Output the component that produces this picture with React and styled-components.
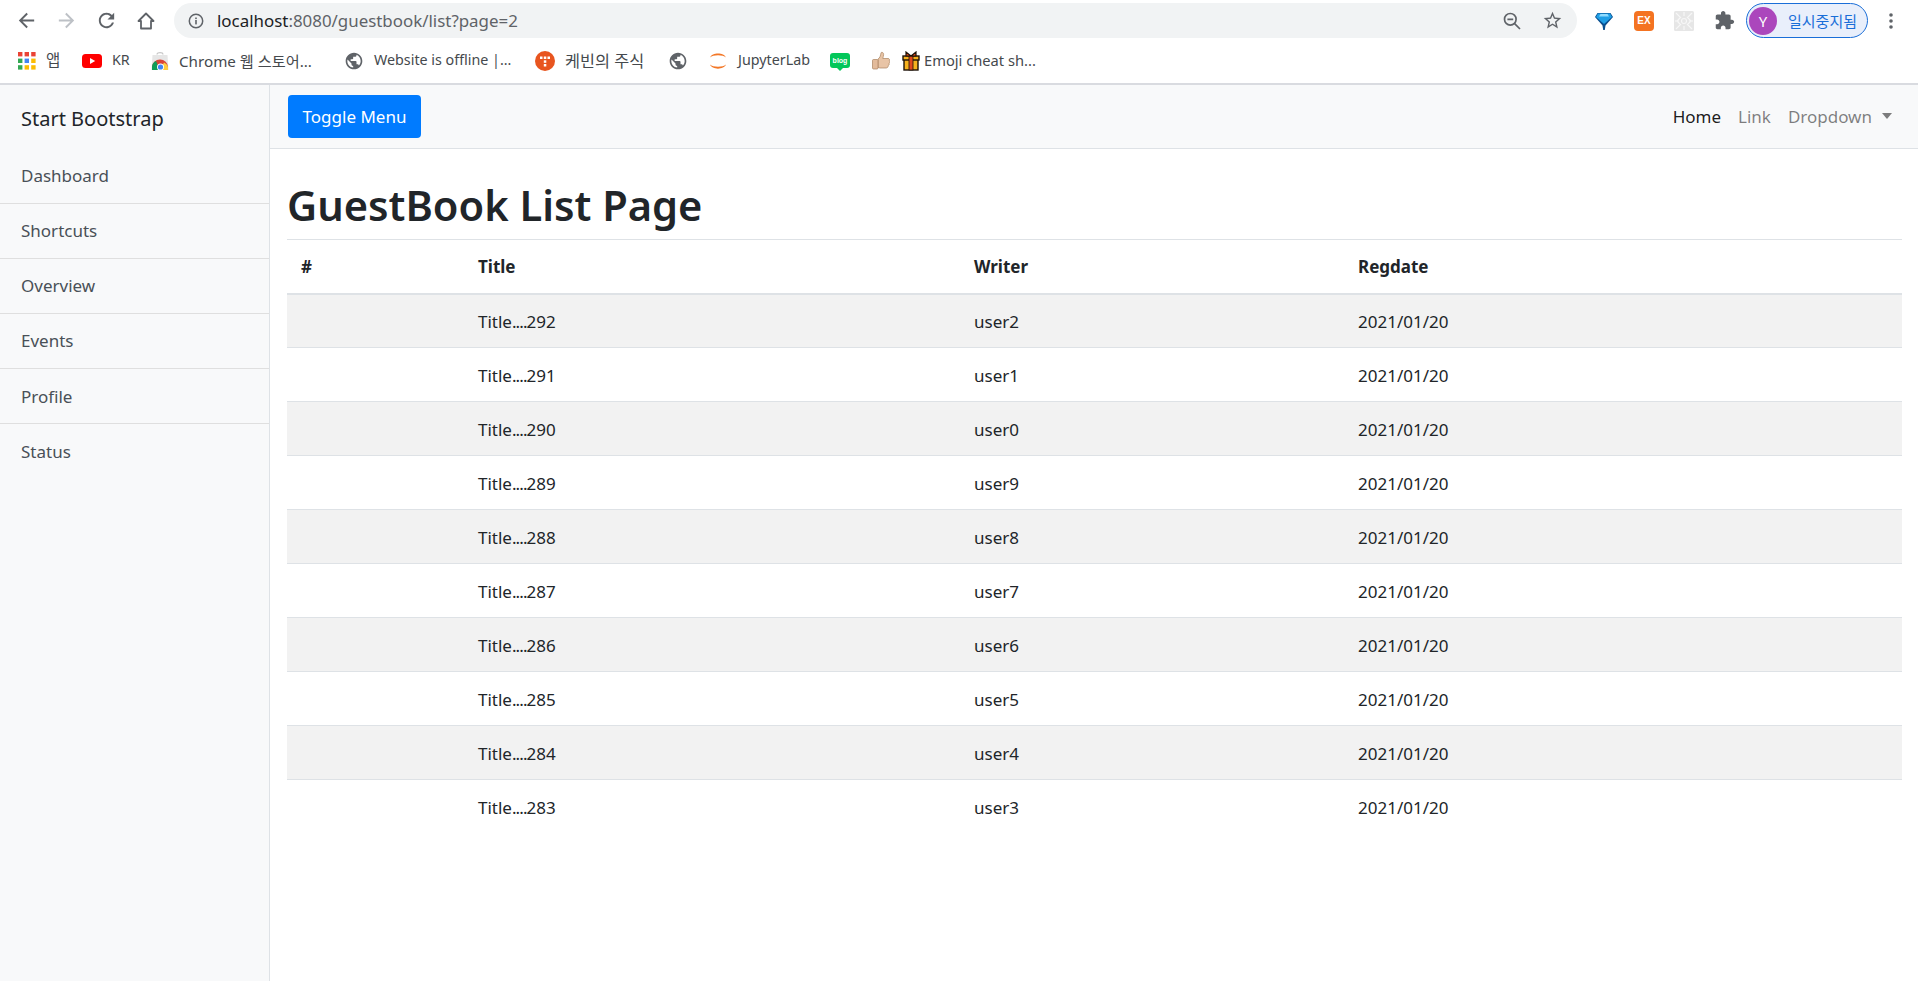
import React from "react";
import styled, { createGlobalStyle } from "styled-components";

const FONT = `"Noto Sans", "Noto Sans CJK KR", sans-serif`;

const Global = createGlobalStyle`
  html, body { margin: 0; padding: 0; background: #fff; }
  body { font-family: ${FONT}; color: #212529; height: 981px; overflow: hidden; }
`;

/* ---------- browser chrome ---------- */
const Chrome = styled.header`
  height: 83px;
  border-bottom: 2px solid #d9dbe0;
  background: #fff;
`;
const Toolbar = styled.div`
  height: 41px;
  display: flex;
  align-items: center;
  padding: 0 7px 0 6px;
`;
const NavIcon = styled.span`
  width: 40px;
  height: 36px;
  display: flex;
  align-items: center;
  justify-content: center;
  flex: none;
`;
const Omnibox = styled.div`
  width: 1403px;
  height: 35px;
  margin: 0 0 0 8px;
  border-radius: 18px;
  background: #f1f3f4;
  display: flex;
  align-items: center;
  padding: 0 5px 0 14px;
  box-sizing: border-box;
  flex: none;
`;
const Url = styled.div`
  margin-left: 13px;
  flex: 1;
  font-size: 16.9px;
  color: #5f6368;
  white-space: nowrap;
  & b { font-weight: 400; color: #202124; }
`;
const OmniIcon = styled.span`
  width: 40px;
  display: flex;
  justify-content: center;
  align-items: center;
`;
const ExtGroup = styled.div`
  display: flex;
  align-items: center;
  margin-left: 7px;
  flex: none;
`;
const ExtIcon = styled.span`
  width: 40px;
  height: 36px;
  display: flex;
  align-items: center;
  justify-content: center;
`;
const ExBadge = styled.span`
  width: 20px;
  height: 20px;
  border-radius: 4px;
  background: #f47321;
  color: #fff;
  font-size: 10px;
  font-weight: 700;
  line-height: 20px;
  text-align: center;
  font-family: "Liberation Sans", sans-serif;
`;
const Profile = styled.div`
  width: 122px;
  height: 35px;
  box-sizing: border-box;
  margin-left: 2px;
  border: 1.5px solid #1a6ed8;
  border-radius: 18px;
  background: #e9effb;
  display: flex;
  align-items: center;
  padding-left: 2px;
  flex: none;
`;
const Avatar = styled.span`
  width: 28px;
  height: 28px;
  border-radius: 50%;
  background: #ab47bc;
  color: #fff;
  font-size: 15px;
  display: flex;
  align-items: center;
  justify-content: center;
  flex: none;
`;
const ProfileText = styled.span`
  margin-left: 11px;
  font-size: 15px;
  color: #1a6ed8;
  white-space: nowrap;
`;
const Dots = styled.span`
  margin-left: 7px;
  width: 32px;
  display: flex;
  justify-content: center;
`;
const Bookmarks = styled.div`
  height: 39px;
  display: flex;
  align-items: center;
  padding-left: 18px;
`;
const Bookmark = styled.div`
  width: ${(p) => p.$w}px;
  flex: none;
  display: flex;
  align-items: center;
  height: 24px;
  overflow: hidden;
`;
const BookmarkText = styled.span`
  margin-left: ${(p) => p.$gap ?? 10}px;
  padding-bottom: 2px;
  font-size: ${(p) => p.$size ?? 14.3}px;
  color: #45494d;
  white-space: nowrap;
`;
const BlogBadge = styled.span`
  position: relative;
  width: 20px;
  height: 15px;
  border-radius: 3px;
  background: #03c75a;
  color: #fff;
  font-size: 7px;
  font-weight: 700;
  line-height: 15px;
  text-align: center;
  font-family: "Liberation Sans", sans-serif;
  &::after {
    content: "";
    position: absolute;
    left: 7px;
    bottom: -3px;
    border: 3px solid transparent;
    border-bottom: 0;
    border-top-color: #03c75a;
  }
`;

/* ---------- page ---------- */
const Page = styled.div`
  display: flex;
  height: 896px;
`;
const Sidebar = styled.aside`
  width: 270px;
  box-sizing: border-box;
  flex: none;
  background: #f8f9fa;
  border-right: 1px solid #dee2e6;
`;
const Brand = styled.div`
  height: 64px;
  display: flex;
  align-items: center;
  padding: 2px 0 0 21px;
  box-sizing: border-box;
  font-size: 20px;
  color: #212529;
`;
const MenuItem = styled.div`
  height: 55px;
  box-sizing: border-box;
  padding: 0 0 ${(p) => (p.$low ? 0 : 2)}px 21px;
  display: flex;
  align-items: center;
  font-size: 17px;
  color: #495057;
  border-bottom: ${(p) => (p.$last ? "0" : "1px solid #dfdfdf")};
`;
const Main = styled.main`
  flex: 1;
  min-width: 0;
  display: flex;
  flex-direction: column;
`;
const TopNav = styled.nav`
  height: 64px;
  box-sizing: border-box;
  background: #f8f9fa;
  border-bottom: 1px solid #dee2e6;
  display: flex;
  align-items: center;
  justify-content: space-between;
  padding: 0 26px 1px 18px;
`;
const Toggle = styled.button`
  width: 133px;
  height: 43px;
  padding: 0;
  border: 0;
  border-radius: 4px;
  background: #007bff;
  color: #fff;
  font-family: ${FONT};
  font-size: 17px;
`;
const NavLinks = styled.div`
  display: flex;
  align-items: center;
  gap: 17px;
`;
const NavLink = styled.span`
  font-size: 17px;
  color: ${(p) => (p.$active ? "rgba(0,0,0,.9)" : "rgba(0,0,0,.5)")};
  display: flex;
  align-items: center;
`;
const Caret = styled.i`
  margin-left: 10px;
  border-top: 6px solid rgba(0, 0, 0, 0.5);
  border-left: 5.5px solid transparent;
  border-right: 5.5px solid transparent;
`;
const Content = styled.section`
  padding: 0 16px 0 17px;
`;
const Title = styled.h1`
  margin: 0;
  height: 90px;
  box-sizing: border-box;
  padding-top: 28px;
  font-size: 41.6px;
  line-height: 56px;
  font-weight: 600;
  color: #212529;
`;
const Table = styled.table`
  width: 100%;
  table-layout: fixed;
  border-collapse: collapse;
  font-size: 17px;
`;
const Th = styled.th`
  width: ${(p) => p.$w}px;
  height: 54px;
  padding: 0 0 0 14px;
  box-sizing: border-box;
  text-align: left;
  font-weight: 700;
  color: #212529;
  border-top: 1px solid #dee2e6;
  border-bottom: 2px solid #dee2e6;
`;
const Row = styled.tr`
  background: ${(p) => (p.$odd ? "#f2f2f2" : "#fff")};
`;
const Td = styled.td`
  height: 54px;
  padding: 1px 0 0 14px;
  box-sizing: border-box;
  color: #212529;
  border-top: ${(p) => (p.$first ? "0" : "1px solid #dee2e6")};
`;
const Ellipsis = styled.span`
  letter-spacing: -0.9px;
`;

/* ---------- drawings ---------- */
const I = ({ d, c = "#5f6368", s = 20 }) => (
  <svg width={s} height={s} viewBox="0 0 24 24" fill={c}><path d={d} /></svg>
);
const BACK = "M20 11H7.83l5.59-5.59L12 4l-8 8 8 8 1.41-1.41L7.83 13H20v-2z";
const FWD = "M12 4l-1.41 1.41L16.17 11H4v2h12.17l-5.58 5.59L12 20l8-8z";
const RELOAD = "M17.65 6.35C16.2 4.9 14.21 4 12 4c-4.42 0-7.99 3.58-7.99 8s3.57 8 7.99 8c3.73 0 6.84-2.55 7.73-6h-2.08c-.82 2.33-3.04 4-5.65 4-3.31 0-6-2.69-6-6s2.69-6 6-6c1.66 0 3.14.69 4.22 1.78L13 11h7V4l-2.35 2.35z";
const STAR = "M22 9.24l-7.19-.62L12 2 9.19 8.63 2 9.24l5.46 4.73L5.82 21 12 17.27 18.18 21l-1.63-7.03L22 9.24zM12 15.4l-3.76 2.27 1-4.28-3.32-2.88 4.38-.38L12 6.1l1.71 4.04 4.38.38-3.32 2.88 1 4.28L12 15.4z";
const PUZZLE = "M20.5 11H19V7c0-1.1-.9-2-2-2h-4V3.5C13 2.12 11.88 1 10.5 1S8 2.12 8 3.5V5H4c-1.1 0-1.99.9-1.99 2v3.8H3.5c1.49 0 2.7 1.21 2.7 2.7s-1.21 2.7-2.7 2.7H2V20c0 1.1.9 2 2 2h3.8v-1.5c0-1.49 1.21-2.7 2.7-2.7 1.49 0 2.7 1.21 2.7 2.7V22H17c1.1 0 2-.9 2-2v-4h1.5c1.38 0 2.5-1.12 2.5-2.5S21.88 11 20.5 11z";
const GLOBE = "M12 2C6.48 2 2 6.48 2 12s4.48 10 10 10 10-4.48 10-10S17.52 2 12 2zm-1 17.93c-3.95-.49-7-3.85-7-7.93 0-.62.08-1.21.21-1.79L9 15v1c0 1.1.9 2 2 2v1.93zm6.9-2.54c-.26-.81-1-1.39-1.9-1.39h-1v-3c0-.55-.45-1-1-1H8v-2h2c.55 0 1-.45 1-1V7h2c1.1 0 2-.9 2-2v-.41c2.93 1.19 5 4.06 5 7.41 0 2.08-.8 3.97-2.1 5.39z";

const Home = () => (
  <svg width="20" height="20" viewBox="0 0 20 20" fill="none" stroke="#5f6368" strokeWidth="1.8" strokeLinejoin="round">
    <path d="M10 2.5 2.5 10H5v7.5h10V10h2.5z" />
  </svg>
);
const Info = () => (
  <svg width="16" height="16" viewBox="0 0 16 16">
    <circle cx="8" cy="8" r="6.7" fill="none" stroke="#5f6368" strokeWidth="1.5" />
    <rect x="7.2" y="7" width="1.6" height="4.4" fill="#5f6368" />
    <rect x="7.2" y="4.5" width="1.6" height="1.6" fill="#5f6368" />
  </svg>
);
const ZoomOut = () => (
  <svg width="20" height="20" viewBox="0 0 20 20" fill="none" stroke="#5f6368" strokeWidth="1.7">
    <circle cx="8.3" cy="8.3" r="5.8" />
    <path d="M12.6 12.6 18 18M5.4 8.3h5.8" />
  </svg>
);
const Diamond = () => (
  <svg width="20" height="20" viewBox="0 0 20 20">
    <path d="M3.5 2h13L19 6l-7.500 8.500L10.800 19H9.200l-.7-4.500L1 6z" fill="#0a4f8f" />
    <path d="M4 2.500h12L18 6l-8 7-8-7z" fill="#1f9fe6" />
    <path d="M6.500 3h7l1.500 2.500H5z" fill="#8fdcff" />
  </svg>
);
const Frost = () => (
  <svg width="20" height="20" viewBox="0 0 20 20">
    <rect width="20" height="20" rx="1.5" fill="#e6e6e6" />
    <g fill="none" stroke="#f7f7f7" strokeWidth="1.1">
      <circle cx="10" cy="10" r="2.5" />
      <path d="M2 2l5 5M18 2l-5 5M2 18l5-5M18 18l-5-5M10 1v4M10 15v4M1 10h4M15 10h4" />
      <path d="M3 10l3-3M3 10l3 3M17 10l-3-3M17 10l-3 3" />
    </g>
  </svg>
);
const More = () => (
  <svg width="4" height="16" viewBox="0 0 4 16" fill="#5f6368">
    <circle cx="2" cy="2" r="1.8" /><circle cx="2" cy="8" r="1.8" /><circle cx="2" cy="14" r="1.8" />
  </svg>
);
const Apps = () => (
  <svg width="18" height="18" viewBox="0 0 18 18">
    {[["#ea4335", "#ea4335", "#ea4335"], ["#34a853", "#4285f4", "#fbbc05"], ["#34a853", "#fbbc05", "#fbbc05"]].map((row, y) =>
      row.map((c, x) => <rect key={`${x}${y}`} x={x * 6.6} y={y * 6.6} width="4.4" height="4.4" fill={c} />)
    )}
  </svg>
);
const YouTube = () => (
  <svg width="20" height="14" viewBox="0 0 20 14">
    <rect width="20" height="14" rx="3.5" fill="#f00" />
    <path d="M8 4l5.2 3L8 10z" fill="#fff" />
  </svg>
);
const Store = () => (
  <svg width="18" height="20" viewBox="0 0 18 20">
    <path d="M6 3.5C6 1 12 1 12 3.5" fill="none" stroke="#c8c8c8" strokeWidth="1.2" />
    <path d="M1.5 4h15l1 15H.5z" fill="#e6e6e6" />
    <path d="M1 16a8 7.5 0 0 1 16 0v3H1z" fill="#db4437" />
    <path d="M1 19v-3a8 7 0 0 1 4-6l4 9z" fill="#0f9d58" />
    <path d="M13 11.500a8 7 0 0 1 4 4.500v3h-8z" fill="#ffcd40" />
    <circle cx="9.500" cy="16" r="3.500" fill="#fff" />
    <circle cx="9.500" cy="16" r="2.600" fill="#4285f4" />
  </svg>
);
const Kevin = () => (
  <svg width="20" height="20" viewBox="0 0 20 20">
    <circle cx="10" cy="10" r="10" fill="#e8551f" />
    <g fill="#fff">
      <rect x="5" y="5.500" width="2.500" height="2.500" /><rect x="8.800" y="5.500" width="2.500" height="2.500" /><rect x="12.500" y="5.500" width="2.500" height="2.500" />
      <rect x="8.800" y="9.300" width="2.500" height="2.500" /><rect x="8.800" y="13" width="2.500" height="2.500" />
    </g>
  </svg>
);
const Jupyter = () => (
  <svg width="20" height="20" viewBox="0 0 20 20" fill="#f37726">
    <path d="M2 6.500C4 1 16 1 18 6.500 15 3.500 5 3.500 2 6.500z" />
    <path d="M2 13.500C4 19 16 19 18 13.500 15 16.500 5 16.500 2 13.500z" />
  </svg>
);
const Thumb = () => (
  <svg width="20" height="20" viewBox="0 0 20 20">
    <path d="M8 8c2-1 2.500-3.500 3-6 .2-1.200 2.600-1 2.600 1.500 0 1.500-.6 2.800-.8 4H18c1.500 0 1.800 1.200 1.400 2.200.6 1 .4 2-.3 2.600.3 1-.1 1.900-.9 2.300.1 1.400-.8 2.400-2.200 2.400H10c-1 0-1.500-.6-2-.7z" fill="#e8c4a6" stroke="#a9825f" strokeWidth=".7" />
    <rect x="2.500" y="8.500" width="5.500" height="9.500" rx="1" fill="#e3bb9b" stroke="#a9825f" strokeWidth=".7" />
  </svg>
);
const Gift = () => (
  <svg width="18" height="20" viewBox="0 0 18 20">
    <rect x="2" y="7" width="14" height="12" fill="#f7b11d" stroke="#1d1208" strokeWidth="1.400" />
    <rect x="1" y="5" width="16" height="4" fill="#f7b11d" stroke="#1d1208" strokeWidth="1.400" />
    <rect x="7" y="5" width="4" height="14" fill="#e2491d" stroke="#1d1208" strokeWidth=".8" />
    <path d="M9 5 4 1v4zM9 5l5-4v4z" fill="#e2491d" stroke="#1d1208" strokeWidth="1.200" />
  </svg>
);

const rows = [
  ["292", "user2"], ["291", "user1"], ["290", "user0"], ["289", "user9"], ["288", "user8"],
  ["287", "user7"], ["286", "user6"], ["285", "user5"], ["284", "user4"], ["283", "user3"],
];
const menu = ["Dashboard", "Shortcuts", "Overview", "Events", "Profile", "Status"];

export default function App() {
  return (
    <>
      <Global />
      <Chrome>
        <Toolbar>
          <NavIcon><I d={BACK} s={23} /></NavIcon>
          <NavIcon><I d={FWD} c="#bdc1c6" s={23} /></NavIcon>
          <NavIcon><I d={RELOAD} s={23} /></NavIcon>
          <NavIcon><Home /></NavIcon>
          <Omnibox>
            <Info />
            <Url><b>localhost</b>:8080/guestbook/list?page=2</Url>
            <OmniIcon><ZoomOut /></OmniIcon>
            <OmniIcon><I d={STAR} s={21} /></OmniIcon>
          </Omnibox>
          <ExtGroup>
            <ExtIcon><Diamond /></ExtIcon>
            <ExtIcon><ExBadge>EX</ExBadge></ExtIcon>
            <ExtIcon><Frost /></ExtIcon>
            <ExtIcon><I d={PUZZLE} s={21} /></ExtIcon>
          </ExtGroup>
          <Profile>
            <Avatar>Y</Avatar>
            <ProfileText>일시중지됨</ProfileText>
          </Profile>
          <Dots><More /></Dots>
        </Toolbar>
        <Bookmarks>
          <Bookmark $w={64}><Apps /><BookmarkText $size={15.500}>앱</BookmarkText></Bookmark>
          <Bookmark $w={69}><YouTube /><BookmarkText>KR</BookmarkText></Bookmark>
          <Bookmark $w={193}><Store /><BookmarkText $size={15.200}>Chrome 웹 스토어...</BookmarkText></Bookmark>
          <Bookmark $w={191}><I d={GLOBE} /><BookmarkText>Website is offline |...</BookmarkText></Bookmark>
          <Bookmark $w={133}><Kevin /><BookmarkText $size={16.300}>케빈의 주식</BookmarkText></Bookmark>
          <Bookmark $w={40}><I d={GLOBE} /></Bookmark>
          <Bookmark $w={122}><Jupyter /><BookmarkText>JupyterLab</BookmarkText></Bookmark>
          <Bookmark $w={40}><BlogBadge>blog</BlogBadge></Bookmark>
          <Bookmark $w={32}><Thumb /></Bookmark>
          <Bookmark $w={140}><Gift /><BookmarkText $gap={4} $size={14.700}>Emoji cheat sh...</BookmarkText></Bookmark>
        </Bookmarks>
      </Chrome>
      <Page>
        <Sidebar>
          <Brand>Start Bootstrap</Brand>
          {menu.map((m, i) => <MenuItem key={m} $low={i >= 4} $last={i === menu.length - 1}>{m}</MenuItem>)}
        </Sidebar>
        <Main>
          <TopNav>
            <Toggle>Toggle Menu</Toggle>
            <NavLinks>
              <NavLink $active>Home</NavLink>
              <NavLink>Link</NavLink>
              <NavLink>Dropdown<Caret /></NavLink>
            </NavLinks>
          </TopNav>
          <Content>
            <Title>GuestBook List Page</Title>
            <Table>
              <thead>
                <tr>
                  <Th $w={177}>#</Th>
                  <Th $w={496}>Title</Th>
                  <Th $w={384}>Writer</Th>
                  <Th>Regdate</Th>
                </tr>
              </thead>
              <tbody>
                {rows.map(([n, u], i) => (
                  <Row key={n} $odd={i % 2 === 0}>
                    <Td $first={i === 0} />
                    <Td $first={i === 0}>Title<Ellipsis>....</Ellipsis>{n}</Td>
                    <Td $first={i === 0}>{u}</Td>
                    <Td $first={i === 0}>2021/01/20</Td>
                  </Row>
                ))}
              </tbody>
            </Table>
          </Content>
        </Main>
      </Page>
    </>
  );
}
